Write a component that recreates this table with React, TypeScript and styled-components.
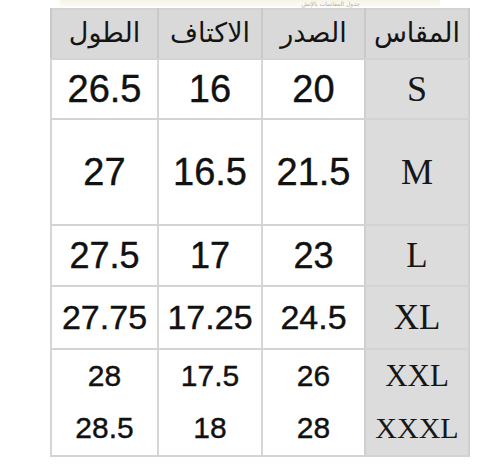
import React from 'react'
import styled, { createGlobalStyle } from 'styled-components';

const GlobalStyle = createGlobalStyle`
    html, body {
        margin : 0;
        padding : 0;
        background : #ffffff;
    }
`

const Page = styled.div`
    width : 500px;
    height : 469px;
    overflow : hidden;
    background : #ffffff;
    display : flex;
    flex-direction : column;
`

const Caption = styled.div`
    margin : 0 60px;
    height : 7px;
    display : flex;
    align-items : center;
    justify-content : flex-end;
    padding-right : 80px;
    background : linear-gradient(#f6f3e6, #fdfcf7);
    span {
        font-family : "DejaVu Sans", sans-serif;
        font-size : 6px;
        line-height : 7px;
        color : #b0b0b0;
    }
`

const SizeTable = styled.table`
    direction : rtl;
    margin : 1px 0 0 50px;
    width : 418px;
    border-collapse : collapse;
    table-layout : fixed;
    border-top : 2px solid #d3d3d3;
`

const Row = styled.tr<{ $height: number; $open?: boolean }>`
    height : ${props => props.$height}px;
    td, th {
        border-bottom : ${props => props.$open ? 'none' : '2px solid #d3d3d3'};
    }
`

const HeadCell = styled.th`
    background : #d9d9d9;
    border-left : 2px solid #c9c9c9;
    border-right : 2px solid #c9c9c9;
    font-family : "DejaVu Sans", "Noto Sans", sans-serif;
    font-weight : normal;
    font-size : 27px;
    line-height : 1;
    color : #141414;
    text-align : center;
    vertical-align : middle;
    padding : 0 0 3px;
    white-space : nowrap;
`

const SizeCell = styled.td<{ $font: number }>`
    background : #dcdcdc;
    border-left : 2px solid #cfcfcf;
    border-right : 2px solid #cfcfcf;
    font-family : "Liberation Serif", "Times New Roman", serif;
    font-size : ${props => props.$font}px;
    color : #161616;
    text-align : center;
    vertical-align : middle;
    padding : 0;
`

const ValueCell = styled.td<{ $font: number }>`
    background : #ffffff;
    border-left : 2px solid #d6d6d6;
    border-right : 2px solid #d6d6d6;
    font-family : "Liberation Sans", Arial, sans-serif;
    font-size : ${props => props.$font}px;
    color : #111111;
    text-align : center;
    vertical-align : middle;
    padding : 0;
    -webkit-text-stroke : 0.4px #111111;
`

type SizeRow = {
    size: string;
    chest: string;
    shoulders: string;
    length: string;
    height: number;
    font: number;
    sizeFont: number;
    open?: boolean;
}

const rows: SizeRow[] = [
    { size: 'S', chest: '20', shoulders: '16', length: '26.5', height: 60, font: 38, sizeFont: 36 },
    { size: 'M', chest: '21.5', shoulders: '16.5', length: '27', height: 106, font: 38, sizeFont: 36 },
    { size: 'L', chest: '23', shoulders: '17', length: '27.5', height: 61, font: 36, sizeFont: 35 },
    { size: 'XL', chest: '24.5', shoulders: '17.25', length: '27.75', height: 63, font: 34, sizeFont: 35 },
    { size: 'XXL', chest: '26', shoulders: '17.5', length: '28', height: 52, font: 30, sizeFont: 31, open: true },
    { size: 'XXXL', chest: '28', shoulders: '18', length: '28.5', height: 55, font: 30, sizeFont: 30 },
]

function App() {
    return (
        <Page>
            <GlobalStyle />
            <Caption>
                <span>جدول المقاسات بالإنش</span>
            </Caption>
            <SizeTable>
                <colgroup>
                    <col style={{ width: 104 }} />
                    <col style={{ width: 103 }} />
                    <col style={{ width: 104 }} />
                    <col style={{ width: 107 }} />
                </colgroup>
                <thead>
                    <Row $height={50}>
                        <HeadCell>المقاس</HeadCell>
                        <HeadCell>الصدر</HeadCell>
                        <HeadCell>الاكتاف</HeadCell>
                        <HeadCell>الطول</HeadCell>
                    </Row>
                </thead>
                <tbody>
                    {rows.map(row => (
                        <Row key={row.size} $height={row.height} $open={row.open}>
                            <SizeCell $font={row.sizeFont}>{row.size}</SizeCell>
                            <ValueCell $font={row.font}>{row.chest}</ValueCell>
                            <ValueCell $font={row.font}>{row.shoulders}</ValueCell>
                            <ValueCell $font={row.font}>{row.length}</ValueCell>
                        </Row>
                    ))}
                </tbody>
            </SizeTable>
        </Page>
    )
}

export default App
